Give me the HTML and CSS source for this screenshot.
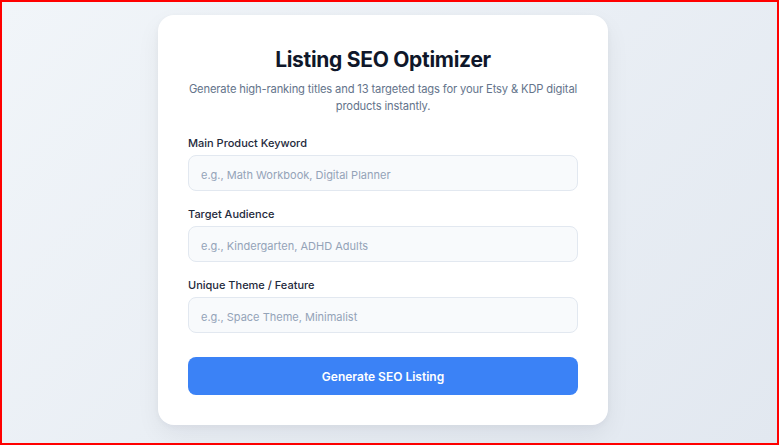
FILE: index.html
```html
<!DOCTYPE html>
<html lang="en">
<head>
<meta charset="utf-8">
<title>Listing SEO Optimizer</title>
<link rel="stylesheet" href="styles.css">
</head>
<body>
<div class="frame">
  <main class="card">
    <h1 class="title">Listing SEO Optimizer</h1>
    <p class="subtitle">Generate high-ranking titles and 13 targeted tags for your Etsy &amp; KDP digital products instantly.</p>
    <div class="field">
      <label class="label" for="kw">Main Product Keyword</label>
      <input class="input" id="kw" type="text" placeholder="e.g., Math Workbook, Digital Planner">
    </div>
    <div class="field">
      <label class="label" for="aud">Target Audience</label>
      <input class="input" id="aud" type="text" placeholder="e.g., Kindergarten, ADHD Adults">
    </div>
    <div class="field">
      <label class="label" for="theme">Unique Theme / Feature</label>
      <input class="input" id="theme" type="text" placeholder="e.g., Space Theme, Minimalist">
    </div>
    <button class="button" type="button">Generate SEO Listing</button>
  </main>
</div>
</body>
</html>
```

FILE: styles.css
```css
* { box-sizing: border-box; }
html, body { margin: 0; padding: 0; }
body {
  font-family: Inter, "Noto Sans", "Liberation Sans", sans-serif;
}
.frame {
  height: 445px;
  border: 2px solid #ff0000;
  background: linear-gradient(135deg, #f1f5f9 0%, #e2e8f0 100%);
  display: flex;
  justify-content: center;
  align-items: flex-start;
  padding: 13px 13px 0 0;
}
.card {
  width: 450px;
  background: #ffffff;
  border-radius: 16px;
  padding: 31px 30px 30px;
  box-shadow: 0 10px 25px rgba(15, 23, 42, 0.06), 0 2px 6px rgba(15, 23, 42, 0.04);
  display: flex;
  flex-direction: column;
}
.title {
  margin: 0 0 7px;
  text-align: center;
  font-size: 21px;
  line-height: 28px;
  font-weight: 700;
  color: #0f172a;
  letter-spacing: -0.3px;
}
.subtitle {
  margin: 0 0 20px;
  text-align: center;
  font-size: 11.2px;
  line-height: 17px;
  color: #64748b;
  letter-spacing: -0.15px;
}
.field {
  display: flex;
  flex-direction: column;
  margin-bottom: 15px;
}
.label {
  font-size: 11px;
  line-height: 17px;
  font-weight: 500;
  color: #1e293b;
  margin-bottom: 3px;
}
.input {
  height: 36px;
  border: 1px solid #e2e8f0;
  border-radius: 8px;
  background: #f8fafc;
  padding: 3px 12px 0;
  font-family: inherit;
  font-size: 11px;
  color: #1e293b;
  outline: none;
}
.input::placeholder { color: #94a3b8; }
.button {
  margin-top: 9px;
  height: 38px;
  border: none;
  border-radius: 8px;
  background: #3b82f6;
  color: #ffffff;
  font-family: inherit;
  font-size: 12px;
  font-weight: 600;
}
```
